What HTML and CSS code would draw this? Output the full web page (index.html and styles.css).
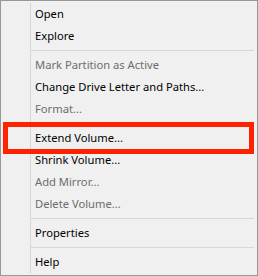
FILE: index.html
```html
<!DOCTYPE html>
<html lang="en">

<head>
  <meta charset="UTF-8">
  <meta name="viewport" content="width=device-width, initial-scale=1.0">
  <title>Disk Management - Volume Menu</title>
  <link rel="stylesheet" href="styles.css">
</head>

<body>
  <div class="context-menu">
    <ul class="menu-list">
      <li class="menu-item">Open</li>
      <li class="menu-item">Explore</li>
      <li class="menu-separator"></li>
      <li class="menu-item disabled">Mark Partition as Active</li>
      <li class="menu-item">Change Drive Letter and Paths...</li>
      <li class="menu-item disabled">Format...</li>
      <li class="menu-separator"></li>
      <li class="menu-item marked">Extend Volume...<span class="mark-box"></span></li>
      <li class="menu-item">Shrink Volume...</li>
      <li class="menu-item disabled">Add Mirror...</li>
      <li class="menu-item disabled">Delete Volume...</li>
      <li class="menu-separator"></li>
      <li class="menu-item">Properties</li>
      <li class="menu-separator"></li>
      <li class="menu-item">Help</li>
    </ul>
  </div>
</body>

</html>
```

FILE: styles.css
```css
html, body {
  margin: 0;
  padding: 0;
  background: #f0f0f0;
}

.context-menu {
  width: 258px;
  height: 276px;
  box-sizing: border-box;
  border: 1px solid #979797;
  padding: 2px;
  background: #f0f0f0;
  font-family: "Noto Sans", "Open Sans", sans-serif;
  font-size: 11.2px;
}

/* the gutter line runs down the icon column */
.menu-list {
  list-style: none;
  margin: 0;
  padding: 0;
  background: linear-gradient(to right, transparent 27px, #d7d7d7 27px, #d7d7d7 28px, transparent 28px);
}

.menu-item {
  position: relative;
  height: 22px;
  line-height: 22px;
  padding-left: 32px;
  color: #000;
  white-space: nowrap;
}

.menu-item.disabled {
  color: #6d6d6d;
}

.menu-separator {
  height: 7px;
  margin: 0 1px 0 28px;
  background: linear-gradient(#d7d7d7, #d7d7d7) 0 3px / 100% 1px no-repeat;
}

/* red callout drawn round the chosen item */
.mark-box {
  position: absolute;
  top: -5px;
  bottom: -5px;
  left: 0;
  right: 1px;
  border: 5px solid #ff2200;
}
```
